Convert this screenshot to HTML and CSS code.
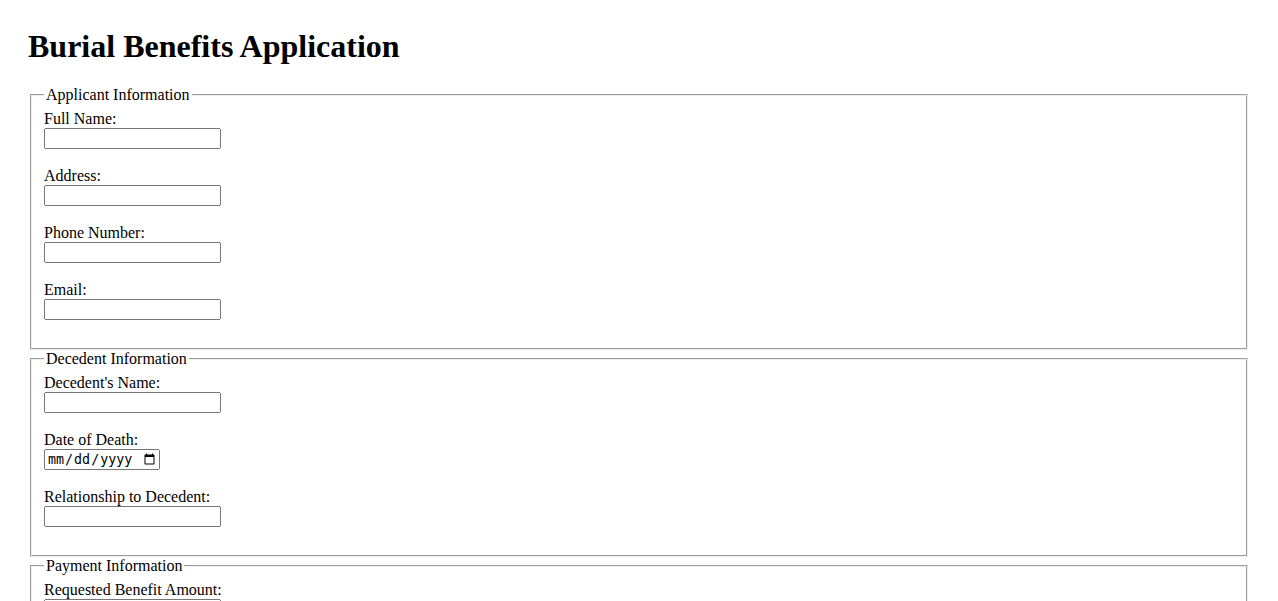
FILE: index.html
```html
<!DOCTYPE html>
<html lang="en">
<head>
    <meta charset="UTF-8">
    <meta name="viewport" content="width=device-width, initial-scale=1.0">
    <title>Burial Benefits Application</title>
    <link rel="stylesheet" href="styles.css">
</head>
<body>
    <h1>Burial Benefits Application</h1>

    <form id="benefitsForm">
        <fieldset>
            <legend>Applicant Information</legend>
            <label for="fullName">Full Name:</label><br>
            <input type="text" id="fullName" name="fullName" required><br><br>

            <label for="address">Address:</label><br>
            <input type="text" id="address" name="address" required><br><br>

            <label for="phone">Phone Number:</label><br>
            <input type="tel" id="phone" name="phone" required><br><br>

            <label for="email">Email:</label><br>
            <input type="email" id="email" name="email" required><br><br>
        </fieldset>

        <fieldset>
            <legend>Decedent Information</legend>
            <label for="decedentName">Decedent's Name:</label><br>
            <input type="text" id="decedentName" name="decedentName" required><br><br>

            <label for="dateOfDeath">Date of Death:</label><br>
            <input type="date" id="dateOfDeath" name="dateOfDeath" required><br><br>

            <label for="relationship">Relationship to Decedent:</label><br>
            <input type="text" id="relationship" name="relationship" required><br><br>
        </fieldset>

        <fieldset>
            <legend>Payment Information</legend>
            <label for="amount">Requested Benefit Amount:</label><br>
            <input type="number" id="amount" name="amount" required><br><br>

            <label for="account">Bank Account Number:</label><br>
            <input type="text" id="account" name="account"><br><br>
        </fieldset>

        <br>
        <button type="submit">Submit Application</button>
    </form>
</body>
</html>
```

FILE: styles.css
```css
body { font-family: "Liberation Serif", serif; margin: 0; padding: 28px; }
h1 { margin-top: 0; }
input { box-sizing: border-box; width: 177px; }
input[type="date"] { width: 116px; }
```
